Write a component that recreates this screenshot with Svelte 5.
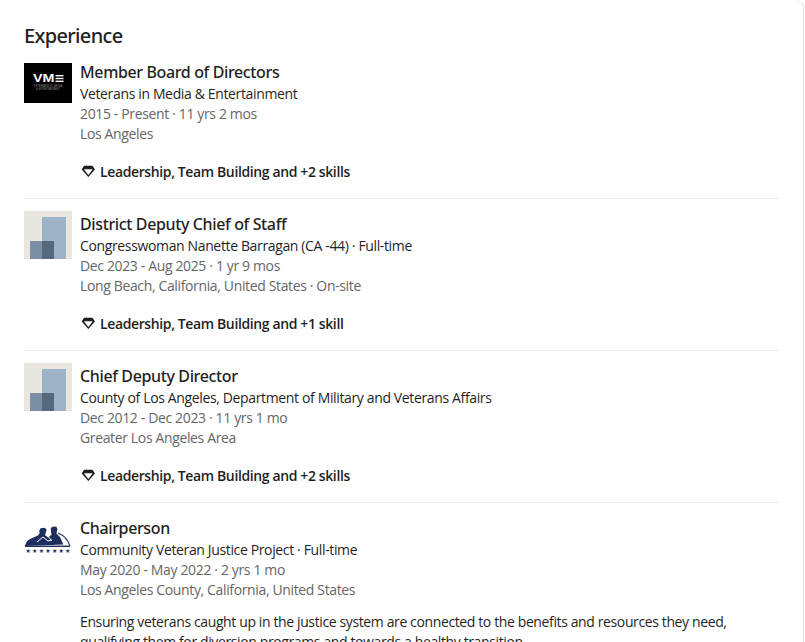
<script>
	let jobs = [
		{
			title: 'Member Board of Directors',
			org: 'Veterans in Media & Entertainment',
			dates: '2015 - Present · 11 yrs 2 mos',
			place: 'Los Angeles',
			skills: 'Leadership, Team Building and +2 skills',
			logo: 'vme'
		},
		{
			title: 'District Deputy Chief of Staff',
			org: 'Congresswoman Nanette Barragan (CA -44) · Full-time',
			dates: 'Dec 2023 - Aug 2025 · 1 yr 9 mos',
			place: 'Long Beach, California, United States · On-site',
			skills: 'Leadership, Team Building and +1 skill',
			logo: 'blank'
		},
		{
			title: 'Chief Deputy Director',
			org: 'County of Los Angeles, Department of Military and Veterans Affairs',
			dates: 'Dec 2012 - Dec 2023 · 11 yrs 1 mo',
			place: 'Greater Los Angeles Area',
			skills: 'Leadership, Team Building and +2 skills',
			logo: 'blank'
		},
		{
			title: 'Chairperson',
			org: 'Community Veteran Justice Project · Full-time',
			dates: 'May 2020 - May 2022 · 2 yrs 1 mo',
			place: 'Los Angeles County, California, United States',
			about: 'Ensuring veterans caught up in the justice system are connected to the benefits and resources they need, qualifying them for diversion programs and towards a healthy transition.',
			logo: 'cvjp'
		}
	]
</script>

<main>
	<section class="card">
		<h2>Experience</h2>
		{#each jobs as job}
			<article class="job">
				<div class="logo">
					{#if job.logo === 'vme'}
						<svg width="48" height="48" viewBox="0 0 48 48">
							<rect y="4" width="48" height="40" fill="#000" />
							<text x="9" y="23" class="vm" textLength="21.5" lengthAdjust="spacingAndGlyphs">VM</text>
							<rect x="31.5" y="16" width="8" height="1.4" fill="#fff" />
							<rect x="31.5" y="18.8" width="8" height="1.4" fill="#fff" />
							<rect x="31.5" y="21.6" width="8" height="1.4" fill="#fff" />
							<text x="24" y="28" class="tiny" textLength="29" lengthAdjust="spacingAndGlyphs">VETERANS IN MEDIA</text>
							<text x="24" y="31.2" class="tiny" textLength="24" lengthAdjust="spacingAndGlyphs">&amp; ENTERTAINMENT</text>
						</svg>
					{:else if job.logo === 'blank'}
						<svg width="48" height="48" viewBox="0 0 48 48">
							<rect width="48" height="48" fill="#e9e5df" />
							<rect x="18" y="6" width="24" height="42" fill="#9db3c8" />
							<rect x="6" y="30" width="24" height="18" fill="#788fa5" />
							<rect x="18" y="30" width="12" height="18" fill="#56687b" />
						</svg>
					{:else}
						<svg width="48" height="48" viewBox="0 0 48 48">
							<path d="M1 31c.6-3.4 2.4-5.6 5-7l8-3.4 1.6-2.4-.4-2.4 1.4-2.6 4-.4 2 1.6-.8 3-.8 2.8 3.4 2.4 3.2-3-.6-3-.2-3.4 1.6-1.4 3.8-.4 1.2 2.4-.6 3.4-.4 1.4 3.6 3.4 3.4 7.6z" fill="#1c2d5e" />
							<path d="M13 27l6-5 5 4 4-1M22 19l6 7" stroke="#fff" stroke-width="1" fill="none" />
							<path d="M34 18c5 2 10 7 12 13" stroke="#1c2d5e" stroke-width="1.1" fill="none" />
							<rect x="1" y="30.6" width="45" height="1.4" fill="#1c2d5e" />
							<text x="24" y="38" class="stars" textLength="45">★★★★★★★</text>
						</svg>
					{/if}
				</div>
				<div class="body">
					<h3>{job.title}</h3>
					<p class="org">{job.org}</p>
					<p class="muted">{job.dates}</p>
					<p class="muted">{job.place}</p>
					{#if job.skills}
						<div class="skills">
							<svg width="16" height="16" viewBox="0 0 16 16">
								<path fill-rule="evenodd" d="M4 1.8h8.5L15 5.4l-6.7 7.6-6.6-7.6zM3.9 5.3h8.9l-4.5 5.6z" fill="#1f1f1f" />
							</svg>
							<span>{job.skills}</span>
						</div>
					{/if}
					{#if job.about}
						<p class="about">{job.about}</p>
					{/if}
				</div>
			</article>
		{/each}
	</section>
</main>

<style>
	:global(body) {
		margin: 0;
		background: #fff;
		overflow: hidden;
	}
	main {
		height: 642px;
		overflow: hidden;
		font-family: "Open Sans", "Noto Sans", sans-serif;
		color: #1f1f1f;
	}
	.card {
		width: 804px;
		box-sizing: border-box;
		background: #fff;
		border-right: 1px solid #dfdeda;
		border-radius: 8px 8px 0 0;
		padding: 24px 24px 0;
	}
	h2 {
		margin: 0 0 11px;
		font-family: "Noto Sans", sans-serif;
		font-size: 20px;
		line-height: 24px;
		font-weight: 500;
		letter-spacing: -0.65px;
	}
	.job {
		display: flex;
		gap: 8px;
		padding: 12px 0 16px;
		border-bottom: 1px solid #e8e8e8;
	}
	.job:first-of-type {
		padding-top: 0;
	}
	.job:last-child {
		border-bottom: 0;
	}
	.logo {
		width: 48px;
		height: 48px;
		flex: none;
	}
	.logo svg {
		display: block;
	}
	.vm {
		font: 700 10px "Liberation Sans", sans-serif;
		fill: #fff;
	}
	.tiny {
		font: 400 2.6px "Liberation Sans", sans-serif;
		fill: #888;
		text-anchor: middle;
	}
	.stars {
		font: 400 6px "DejaVu Sans", sans-serif;
		fill: #1c2d5e;
		text-anchor: middle;
	}
	.body {
		flex: 1;
		min-width: 0;
	}
	h3 {
		margin: 3px 0 2px;
		font-family: "Noto Sans", sans-serif;
		font-size: 16px;
		line-height: 20px;
		font-weight: 500;
		letter-spacing: -0.37px;
	}
	p {
		margin: 0;
		font-size: 14px;
		line-height: 20px;
		letter-spacing: -0.36px;
	}
	.muted {
		color: #666;
	}
	.skills {
		display: flex;
		align-items: center;
		gap: 4px;
		margin-top: 18px;
		font-size: 14px;
		line-height: 20px;
		font-weight: 600;
		letter-spacing: -0.38px;
	}
	.about {
		margin-top: 12px;
		max-width: 700px;
		letter-spacing: -0.38px;
	}
</style>
